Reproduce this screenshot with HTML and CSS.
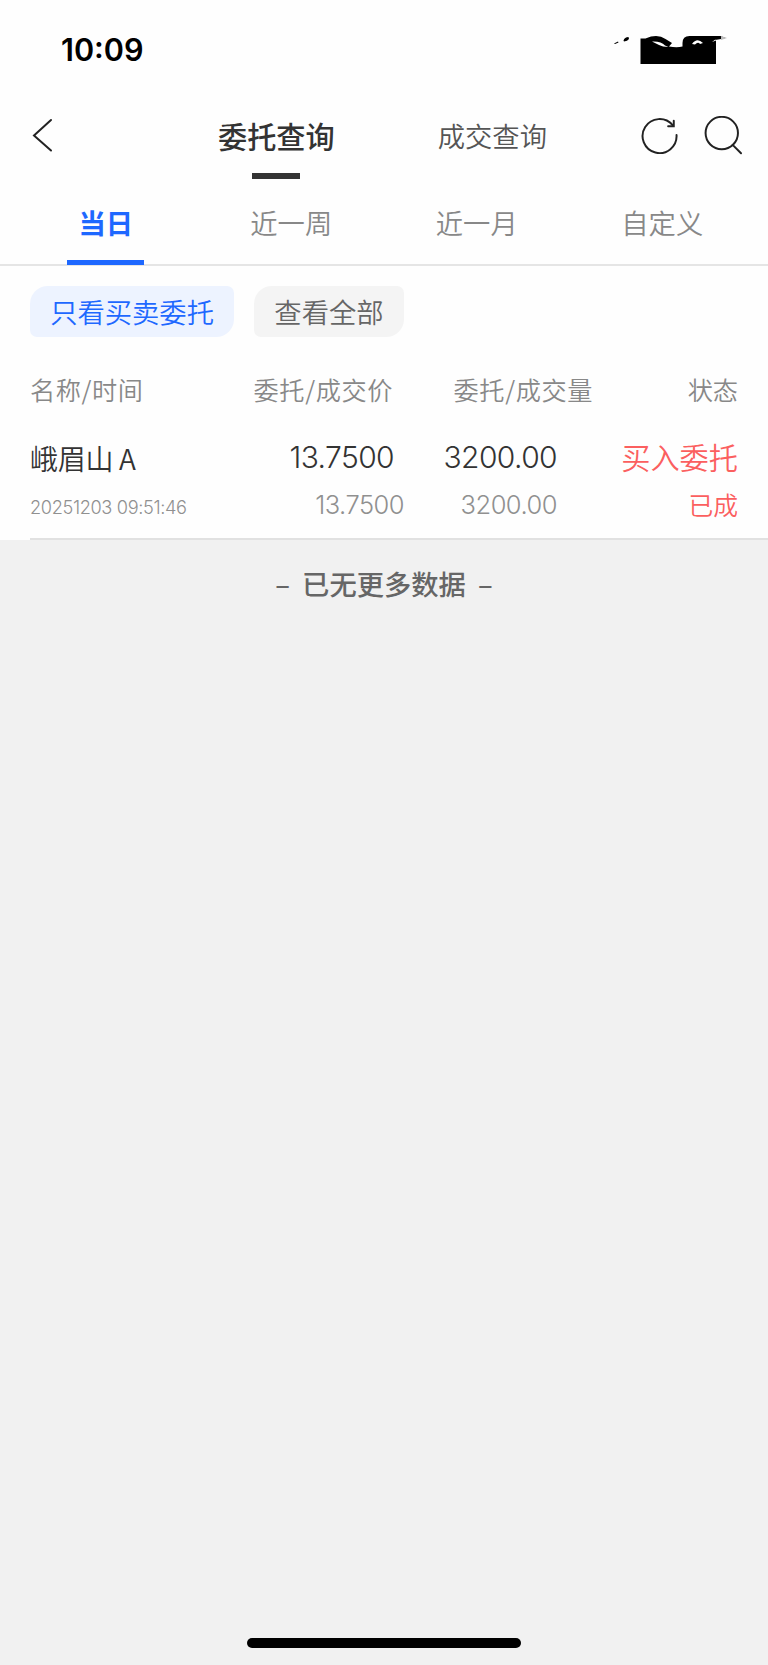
FILE: index.html
```
<!DOCTYPE html>
<html lang="zh-CN">
<head>
    <meta charset="UTF-8">
    <meta name="viewport" content="width=device-width, initial-scale=1.0">
    <title>委托查询</title>
    <link rel="stylesheet" href="styles.css">
</head>
<body>
    <div class="top">
        <div class="status-bar">
            <span class="time">10:09</span>
            <svg class="status-icons" width="126" height="32" viewBox="604 34 126 32">
                <path d="M614 43.500l4-2 .5 1-3.500 1.500zM623.500 40.500q1-3.500 5-3.500l.5 2q-1.500 2-5 2.500z" fill="#000"/>
                <path d="M640.500 38.500h5q12-5 20 .5l6.500 4-3 3.500q8 1.500 13.500 0V43q0-7 7-7h31l5 2-9 2H716V64h-75.500z" fill="#000"/>
                <path d="M652 41.500q9-.5 13 4l3.500 1.500q-6-.2-9.500-2t-7-3.500z" fill="#fff"/>
                <path d="M692 44q5-7 11-1l-3 1q-2-2.500-5 .5z" fill="#fff"/>
                <path d="M712 42l4-1.500h5v-.7l-6 0z" fill="#fff"/>
                <path d="M721 36l6 2-6 2z" fill="#bbb"/>
            </svg>
        </div>

        <div class="header">
            <svg class="back" width="24" height="36" viewBox="0 0 24 36">
                <path d="M19 3L2 18.500 19 33.500"/>
            </svg>
            <div class="header-tabs">
                <a class="header-tab active">委托查询</a>
                <a class="header-tab">成交查询</a>
            </div>
            <div class="header-icons">
                <svg class="icon-refresh" width="40" height="40" viewBox="0 0 40 40">
                    <path d="M37 19A17.200 17.200 0 1 1 33 9"/>
                    <path d="M34.200 4.500V10.200H28.500"/>
                </svg>
                <svg class="icon-search" width="40" height="40" viewBox="0 0 40 40">
                    <circle cx="18" cy="17" r="16.400"/>
                    <path d="M29 29l8.500 8.500"/>
                </svg>
            </div>
        </div>

        <div class="tabs">
            <div class="tab active">当日</div>
            <div class="tab">近一周</div>
            <div class="tab">近一月</div>
            <div class="tab">自定义</div>
        </div>

        <div class="filters">
            <span class="chip active">只看买卖委托</span>
            <span class="chip">查看全部</span>
        </div>

        <div class="list">
            <div class="row list-head">
                <span>名称/时间</span>
                <span>委托/成交价</span>
                <span>委托/成交量</span>
                <span>状态</span>
            </div>
            <div class="row main-line">
                <span class="name">峨眉山 A</span>
                <span class="num">13.7500</span>
                <span class="num">3200.00</span>
                <span class="state">买入委托</span>
            </div>
            <div class="row sub-line">
                <span class="date">20251203 09:51:46</span>
                <span class="num">13.7500</span>
                <span class="num">3200.00</span>
                <span class="state">已成</span>
            </div>
        </div>
    </div>

    <div class="no-more"><span>–</span><span>已无更多数据</span><span>–</span></div>
    <div class="home-bar"></div>
</body>
</html>
```

FILE: styles.css
```
* {
    box-sizing: border-box;
}

body {
    font-family: "Noto Sans CJK SC", sans-serif;
    font-weight: 350;
    margin: 0;
    min-height: 1665px;
    background-color: #f1f1f1;
    display: flex;
    flex-direction: column;
    align-items: center;
    white-space: nowrap;
}

.top {
    width: 100%;
    height: 540px;
    background: #fefefe;
}

.status-bar {
    height: 98px;
    padding: 34px 38px 0 61px;
    display: flex;
    justify-content: space-between;
    align-items: flex-start;
}

.time {
    font-family: Inter, sans-serif;
    font-size: 30.600px;
    line-height: 31px;
    font-weight: 600;
    color: #000;
}

.header {
    height: 82px;
    padding: 0 25px 0 32px;
    display: grid;
    grid-template-columns: 186px 1fr 101px;
}

.back {
    margin-top: 19px;
}

.header svg {
    fill: none;
    stroke: #222;
    stroke-width: 2;
    stroke-linecap: round;
}

.header-tabs {
    display: flex;
    gap: 103px;
}

.header-tab {
    height: 82px;
    font-size: 27.300px;
    line-height: 74px;
    color: #555;
}

.header-tab.active {
    font-size: 29.200px;
    font-weight: 500;
    color: #333;
}

.header-tab.active::after {
    content: "";
    display: block;
    width: 48px;
    height: 6px;
    margin: 1px auto 0;
    background: #333;
}

.header-icons {
    display: flex;
    gap: 24px;
    padding-top: 18px;
    margin-left: -2px;
}

.icon-refresh {
    stroke-width: 2.200;
}

.tabs {
    height: 86px;
    padding: 0 13px;
    display: grid;
    grid-template-columns: repeat(4, 1fr);
    border-bottom: 2px solid #e5e5e5;
}

.tab {
    font-size: 27.300px;
    line-height: 85px;
    text-align: center;
    color: #888;
}

.tab.active {
    color: #1e68ff;
    font-weight: 700;
}

.tab.active::after {
    content: "";
    display: block;
    width: 77px;
    height: 5px;
    margin: -5px auto 0;
    background: #1e68ff;
}

.filters {
    height: 90px;
    padding: 20px 30px;
    display: flex;
    gap: 20px;
}

.chip {
    height: 51px;
    padding: 0 20.200px;
    border-radius: 18px 7px 18px 7px;
    background: #f4f4f4;
    font-size: 27.300px;
    line-height: 50px;
    color: #666;
}

.chip.active {
    background: #edf3ff;
    color: #1e68ff;
}

.list {
    margin-left: 30px;
    height: 184px;
    border-bottom: 2px solid #e1e1e1;
}

.row {
    display: grid;
    grid-template-columns: 180px 184px 1fr 181px;
    padding-right: 30px;
    text-align: right;
}

.row > :first-child {
    text-align: left;
}

.list-head {
    height: 70px;
    font-size: 25.200px;
    line-height: 67px;
    color: #888;
}

.list-head > :nth-child(-n+3) {
    letter-spacing: 0.6px;
}

.list-head > :nth-child(2) {
    margin-right: 1px;
}

.list-head > :nth-child(3) {
    margin-right: -36px;
}

.main-line {
    height: 64px;
    line-height: 62px;
    color: #333;
}

.name {
    font-size: 28px;
    line-height: 65px;
    letter-spacing: -0.3px;
}

.num,
.date {
    font-family: Inter, sans-serif;
    letter-spacing: -0.02em;
}

.main-line .num {
    font-size: 30px;
}

.main-line .state {
    font-size: 29.200px;
    line-height: 60px;
}

.sub-line {
    height: 36px;
    line-height: 29px;
    color: #909090;
}

.date {
    font-size: 18.200px;
    line-height: 34px;
}

.sub-line .num {
    font-size: 25.500px;
}

.sub-line .num:nth-child(2) {
    margin-right: -10px;
}

.sub-line .state {
    font-size: 24.800px;
    line-height: 28px;
}

.row .state {
    color: #fb5f5f;
}

.no-more {
    display: flex;
    gap: 12px;
    margin-top: 18px;
    font-size: 27.300px;
    line-height: 50px;
    font-weight: 500;
    color: #666;
}

.home-bar {
    width: 274px;
    height: 10px;
    margin: auto 0 17px;
    border-radius: 5px;
    background: #000;
}
```
